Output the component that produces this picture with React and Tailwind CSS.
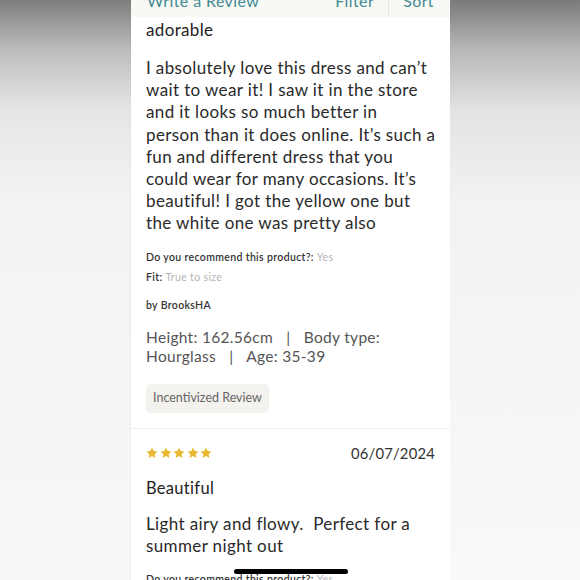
import React from 'react';

const Star = () => (
  <svg width="12" height="12" viewBox="0 0 24 24" className="fill-[#e9b730]">
    <path d="M12 1.2l3.3 7 7.6.9-5.6 5.2 1.5 7.6L12 18.1l-6.8 3.8 1.5-7.6-5.6-5.2 7.6-.9z" />
  </svg>
);

const Meta = ({ label, value }) => (
  <div className="text-[10.5px] leading-[14px] font-semibold tracking-[0.35px] text-[#333]">
    {label} <span className="font-normal text-[#b4b4b4]">{value}</span>
  </div>
);

const bodyLines = [
  'I absolutely love this dress and can’t',
  'wait to wear it! I saw it in the store',
  'and it looks so much better in',
  'person than it does online. It’s such a',
  'fun and different dress that you',
  'could wear for many occasions. It’s',
  'beautiful! I got the yellow one but',
  'the white one was pretty also',
];

const App = () => {
  return (
    <div className="w-[580px] h-[580px] flex overflow-hidden relative font-['Lato',sans-serif]">
      {/* blurred left edge */}
      <div className="w-[131px] h-full bg-[linear-gradient(to_bottom,#7e7e7e_0px,#bdbdbd_50px,#e6e6e6_110px,#f3f3f3_200px,#f7f7f7_580px)]" />

      {/* phone page */}
      <div className="w-[319px] h-full bg-white flex flex-col shadow-[0_0_2px_rgba(0,0,0,0.08)]">
        {/* sticky header */}
        <div className="h-[17px] shrink-0 overflow-hidden bg-[#f8f9f4] px-[16px] flex justify-between text-[16px] leading-[20px] tracking-[0.4px] text-[#418a94]">
          <div className="-mt-[9px]">Write a Review</div>
          <div className="-mt-[9px] flex">
            <span>Filter</span>
            <span className="w-px h-[29px] bg-[#e6e6e2] ml-[14px] mr-[14px]" />
            <span>Sort</span>
          </div>
        </div>

        {/* review 1 */}
        <div className="px-[15px] pb-[15px] border-b border-[#efefef]">
          <div className="mt-[2px] text-[17px] leading-[22px] tracking-[0.35px] text-[#222]">adorable</div>
          <p className="mt-[16px] -mr-[12px] text-[17px] leading-[22.2px] tracking-[0.38px] text-[#2a2a2a]">
            {bodyLines.map((line, i) => (
              <span key={i} className="block whitespace-nowrap">{line}</span>
            ))}
          </p>
          <div className="mt-[15px]">
            <Meta label="Do you recommend this product?:" value="Yes" />
          </div>
          <div className="mt-[6px]">
            <Meta label="Fit:" value="True to size" />
          </div>
          <div className="mt-[14px] text-[10.5px] leading-[14px] font-semibold tracking-[0.35px] text-[#333]">by BrooksHA</div>
          <div className="mt-[16px] text-[15.5px] leading-[19.5px] tracking-[0.3px] text-[#555]">
            <div>Height: 162.56cm <span className="mx-[9px]">|</span> Body type:</div>
            <div>Hourglass <span className="mx-[9px]">|</span> Age: 35-39</div>
          </div>
          <div className="mt-[17px] inline-flex items-center h-[29px] px-[7px] rounded-[5px] bg-[#f4f2ef] text-[12.5px] text-[#666]">
            Incentivized Review
          </div>
        </div>

        {/* review 2 */}
        <div className="px-[15px] pt-[12px]">
          <div className="flex items-center justify-between h-[24px]">
            <div className="flex gap-[1.5px]">
              <Star />
              <Star />
              <Star />
              <Star />
              <Star />
            </div>
            <div className="text-[14.8px] leading-[24px] tracking-[0.2px] text-[#333]">06/07/2024</div>
          </div>
          <div className="mt-[12px] text-[16.5px] leading-[22px] tracking-[0.3px] text-[#222]">Beautiful</div>
          <p className="mt-[14px] text-[17px] leading-[22.2px] tracking-[0.38px] text-[#2a2a2a] whitespace-pre-wrap">
            {'Light airy and flowy.  Perfect for a summer night out'}
          </p>
          <div className="mt-[15px]">
            <Meta label="Do you recommend this product?:" value="Yes" />
          </div>
        </div>
      </div>

      {/* blurred right edge */}
      <div className="flex-1 h-full bg-[linear-gradient(to_bottom,#7a7a7a_0px,#b8b8b8_50px,#e3e3e3_110px,#f2f2f2_200px,#f9f9f9_580px)]" />

      {/* home indicator */}
      <div className="absolute left-[234px] top-[569px] w-[114px] h-[5px] rounded-full bg-black" />
    </div>
  );
};

export default App;
